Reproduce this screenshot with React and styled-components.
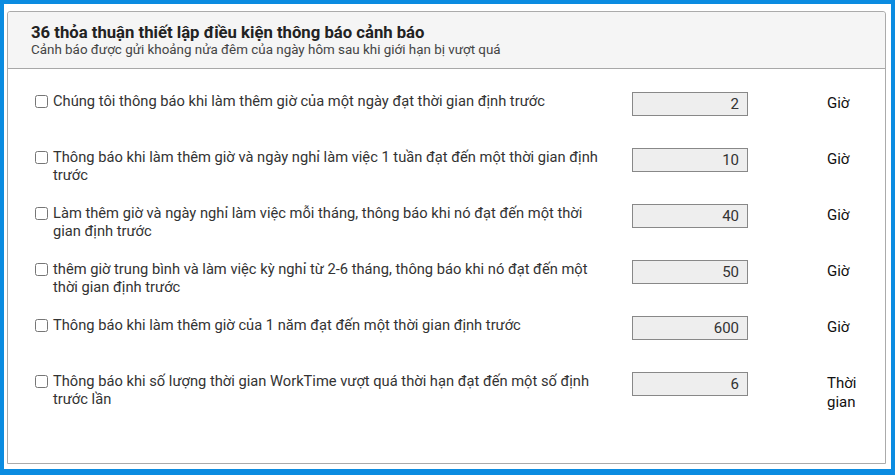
import React from "react";
import styled, { createGlobalStyle } from "styled-components";

const GlobalStyle = createGlobalStyle`
  html, body {
    margin: 0;
    padding: 0;
    background: #fff;
  }
  body {
    font-family: Roboto, "Noto Sans", "Liberation Sans", sans-serif;
  }
`;

// danh sách điều kiện cảnh báo
const rules = [
  { text: "Chúng tôi thông báo khi làm thêm giờ của một ngày đạt thời gian định trước", value: "2", unit: "Giờ" },
  { text: "Thông báo khi làm thêm giờ và ngày nghỉ làm việc 1 tuần đạt đến một thời gian định trước", value: "10", unit: "Giờ" },
  { text: "Làm thêm giờ và ngày nghỉ làm việc mỗi tháng, thông báo khi nó đạt đến một thời gian định trước", value: "40", unit: "Giờ" },
  { text: "thêm giờ trung bình và làm việc kỳ nghỉ từ 2-6 tháng, thông báo khi nó đạt đến một thời gian định trước", value: "50", unit: "Giờ" },
  { text: "Thông báo khi làm thêm giờ của 1 năm đạt đến một thời gian định trước", value: "600", unit: "Giờ" },
  { text: "Thông báo khi số lượng thời gian WorkTime vượt quá thời hạn đạt đến một số định trước lần", value: "6", unit: "Thời gian" },
];

function App() {
  return (
    <>
      <GlobalStyle />
      <Frame>
        <Panel>
          <Header>
            <Title>36 thỏa thuận thiết lập điều kiện thông báo cảnh báo</Title>
            <Subtitle>Cảnh báo được gửi khoảng nửa đêm của ngày hôm sau khi giới hạn bị vượt quá</Subtitle>
          </Header>
          <Body>
            {rules.map((r, i) => (
              <Row key={i}>
                <Check type="checkbox" />
                <Label>{r.text}</Label>
                <NumInput type="text" defaultValue={r.value} />
                <Unit>{r.unit}</Unit>
              </Row>
            ))}
          </Body>
        </Panel>
      </Frame>
    </>
  );
}

const Frame = styled.div`
  box-sizing: border-box;
  width: 895px;
  height: 475px;
  border: 4px solid #0b8ce1;
  border-bottom-width: 6px;
  padding: 7px 5px 5px 3px;
  display: flex;
`;

const Panel = styled.div`
  flex: 1;
  border: 1px solid #ababab;
  border-radius: 3px 3px 0 0;
  display: flex;
  flex-direction: column;
`;

const Header = styled.div`
  background: #f5f5f5;
  border-bottom: 1px solid #a8a8a8;
  border-radius: 3px 3px 0 0;
  padding: 11px 20px 11px 23px;
`;

const Title = styled.div`
  font-size: 16.7px;
  font-weight: 700;
  line-height: 19px;
  color: #222;
`;

const Subtitle = styled.div`
  font-size: 13.4px;
  line-height: 15px;
  color: #444;
`;

const Body = styled.div`
  padding: 23px 0 0 27px;
  display: flex;
  flex-direction: column;
`;

const Row = styled.div`
  display: flex;
  align-items: flex-start;
  height: 56px;
`;

const Check = styled.input`
  flex: none;
  width: 13px;
  height: 13px;
  margin: 3px 5px 0 0;
`;

const Label = styled.div`
  flex: none;
  width: 560px;
  padding-top: 1px;
  font-size: 14.7px;
  line-height: 17.5px;
  color: #333;
`;

const NumInput = styled.input`
  flex: none;
  box-sizing: border-box;
  margin: 0 0 0 19px;
  width: 116px;
  height: 24px;
  border: 1px solid #888;
  border-radius: 0;
  background: #eeeeee;
  padding: 0 8px;
  text-align: right;
  font-family: Roboto, "Liberation Sans", sans-serif;
  font-size: 15px;
  color: #333;
  outline: none;
`;

const Unit = styled.div`
  flex: none;
  width: 45px;
  margin-left: 79px;
  padding-top: 2px;
  font-size: 15px;
  line-height: 19px;
  color: #111;
`;

export default App;
